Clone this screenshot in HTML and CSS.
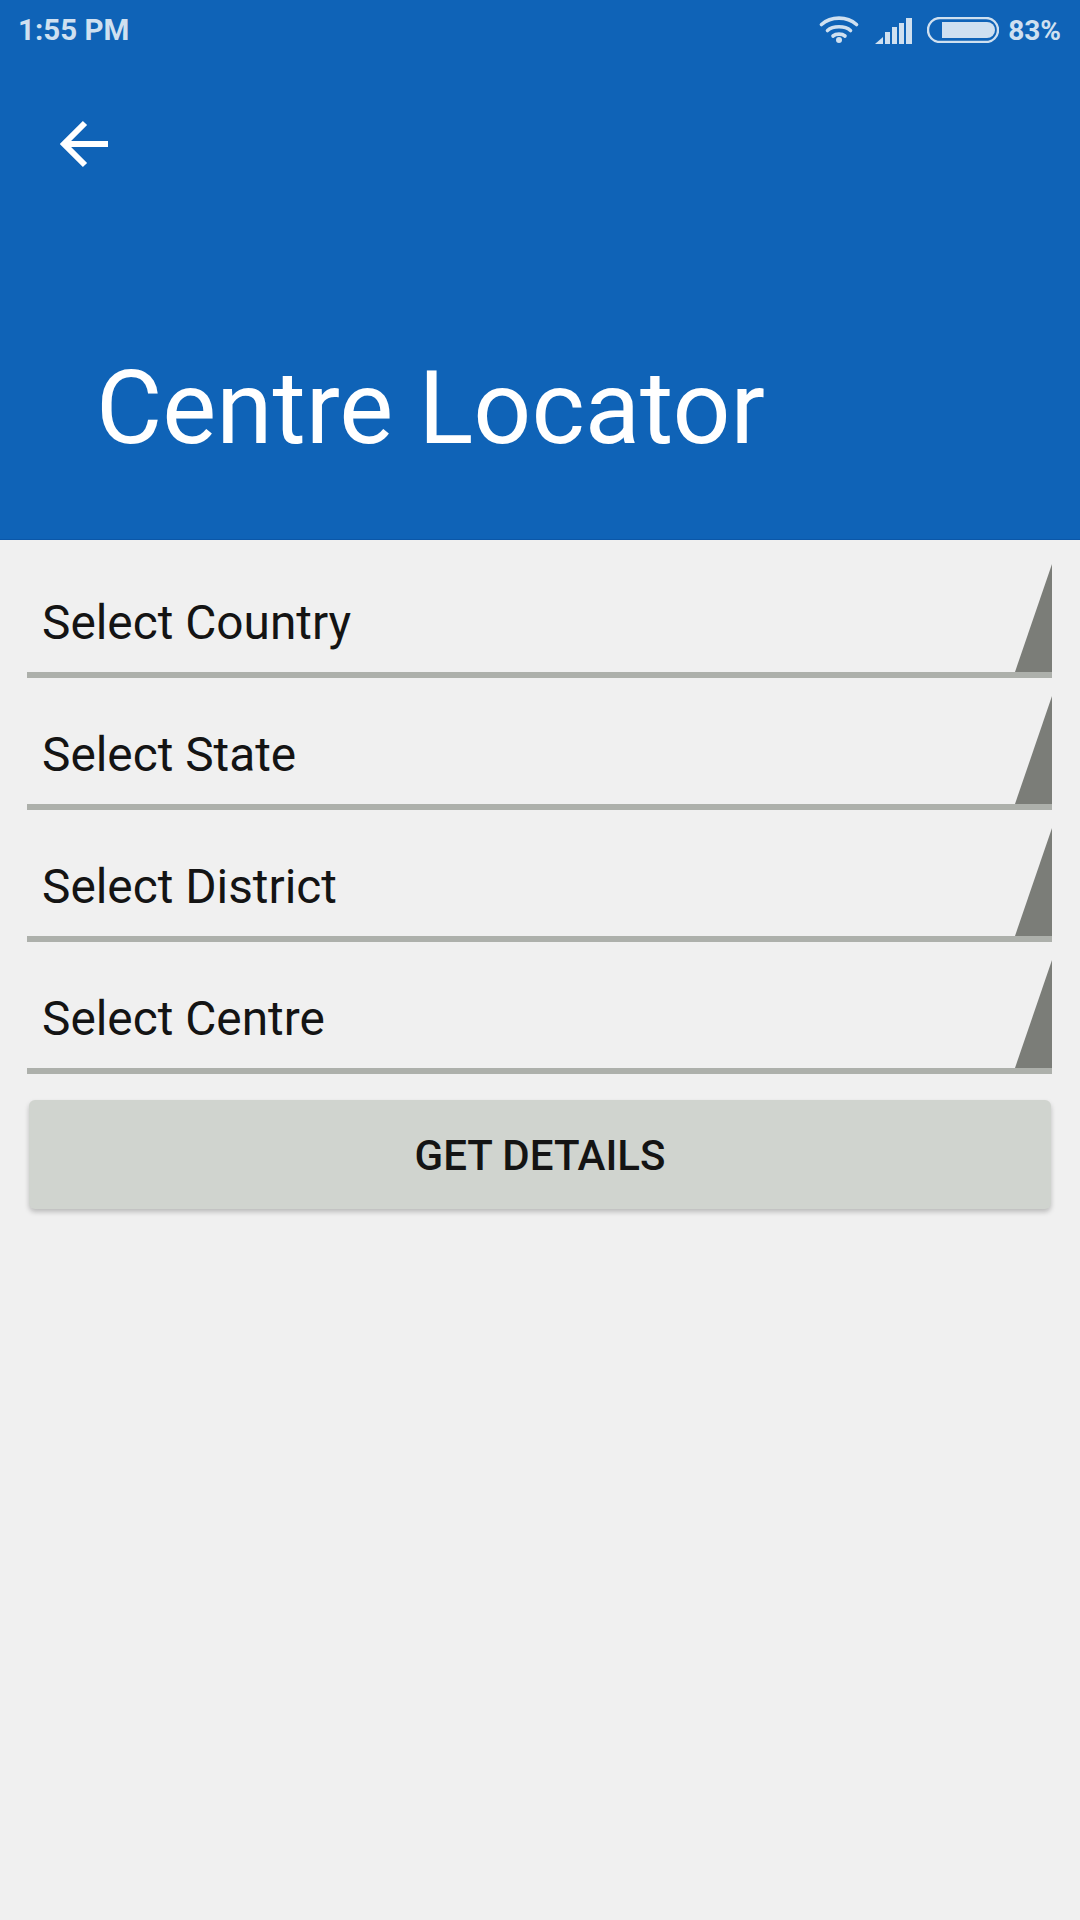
FILE: index.html
```html
<!DOCTYPE html>
<html lang="en">
<head>
<meta charset="utf-8">
<title>Centre Locator</title>
<link rel="stylesheet" href="styles.css">
</head>
<body>
<header class="appbar">
  <div class="status">
    <span class="time">1:55 PM</span>
    <div class="status-icons">
      <svg class="wifi" width="40" height="28" viewBox="0 0 40 28"><g fill="none" stroke="#cfe0f0" stroke-width="3.6" stroke-linecap="round"><path d="M2.5 9.5C12 1 28 1 37.500 9.500"/><path d="M8.500 15.500C14 10.500 26 10.500 31.500 15.500"/><path d="M14 21C17 18.500 23 18.500 26 21"/></g><circle cx="20" cy="25" r="3" fill="#cfe0f0"/></svg>
      <svg class="signal" width="38" height="26" viewBox="0 0 38 26"><g fill="#cfe0f0"><path d="M0 26L8 19V26Z"/><rect x="10" y="14" width="5" height="12"/><rect x="17" y="9" width="5" height="17"/><rect x="24" y="5" width="5" height="21"/><rect x="31" y="0" width="6" height="26"/></g></svg>
      <svg class="battery" width="72" height="26" viewBox="0 0 72 26"><rect x="1" y="1" width="70" height="24" rx="12" fill="none" stroke="#cfe0f0" stroke-width="2.4"/><path d="M15 5H60a8 8 0 0 1 0 16H15Z" fill="#cfe0f0"/></svg>
      <span class="pct">83%</span>
    </div>
  </div>
  <div class="nav">
    <svg class="back" width="50" height="48" viewBox="0 0 50 48"><path d="M48 24H4M25 3L4 24L25 45" fill="none" stroke="#fff" stroke-width="6"/></svg>
  </div>
  <h1 class="title">Centre Locator</h1>
</header>
<main class="form">
  <div class="select"><span>Select Country</span><i class="arrow"></i></div>
  <div class="select"><span>Select State</span><i class="arrow"></i></div>
  <div class="select"><span>Select District</span><i class="arrow"></i></div>
  <div class="select"><span>Select Centre</span><i class="arrow"></i></div>
  <button class="action">GET DETAILS</button>
</main>
</body>
</html>
```
FILE: styles.css
```css
* { box-sizing: border-box; }
html, body { margin: 0; height: 100%; }
body { width: 1080px; height: 1920px; background: #f0f0f0; font-family: Roboto, "Liberation Sans", sans-serif; overflow: hidden; }
.appbar { height: 540px; background: #0f63b7; color: #fff; display: flex; flex-direction: column; border-bottom: 1px solid #0b57a8; }
.status { height: 60px; display: flex; align-items: center; justify-content: space-between; padding: 0 19px 0 18px; color: #cfe0f0; font-weight: 700; font-size: 29.500px; }
.status-icons { display: flex; align-items: center; }
.pct { font-size: 28px; }
.wifi { margin-right: 16px; margin-top: -2px; }
.signal { margin-right: 14px; margin-top: 1px; }
.battery { margin-right: 9px; }
.nav { height: 105px; padding: 60px 0 0 60px; }
.title { margin: 189px 0 0; padding: 0 0 0 96px; font-weight: 400; font-size: 101.800px; line-height: 110px; }
.form { display: flex; flex-direction: column; padding: 0 28px 0 27px; }
.select { height: 132px; display: flex; align-items: flex-end; position: relative; border-bottom: 6px solid #adb0ab; font-size: 47.800px; line-height: 56px; color: #141414; padding: 0 0 21px 15px; }
.select:first-child { height: 138px; }
.arrow { position: absolute; right: 0; bottom: 0; width: 37px; height: 108px; background: #7b7d78; clip-path: polygon(100% 0, 100% 100%, 0 100%); }
.action { height: 109px; margin: 26px 1px 0 2px; padding: 2px 0 0; border: 0; border-radius: 6px; background: #d0d4cf; color: #141414; font: 500 42px Roboto, "Liberation Sans", sans-serif; box-shadow: 0 3px 5px rgba(0,0,0,.22); }
```
